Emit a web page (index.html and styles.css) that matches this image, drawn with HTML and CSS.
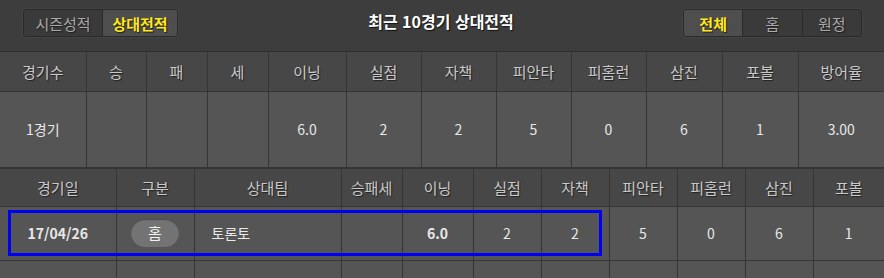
FILE: index.html
```html
<!DOCTYPE html>
<html lang="ko">
<head>
<meta charset="utf-8">
<link rel="stylesheet" href="styles.css">
</head>
<body>
<div class="page">
  <div class="topbar">
    <div class="seg seg-left">
      <span class="seg-btn">시즌성적</span>
      <span class="seg-btn active">상대전적</span>
    </div>
    <div class="title">최근 10경기 상대전적</div>
    <div class="seg seg-right">
      <span class="seg-btn active">전체</span>
      <span class="seg-btn">홈</span>
      <span class="seg-btn">원정</span>
    </div>
  </div>

  <table class="grid summary">
    <colgroup>
      <col style="width:86px"><col style="width:60px"><col style="width:61px"><col style="width:61px">
      <col style="width:78px"><col style="width:75px"><col style="width:75px"><col style="width:75px">
      <col style="width:75px"><col style="width:76px"><col style="width:76px"><col>
    </colgroup>
    <thead>
      <tr><th>경기수</th><th>승</th><th>패</th><th>세</th><th>이닝</th><th>실점</th><th>자책</th><th>피안타</th><th>피홈런</th><th>삼진</th><th>포볼</th><th>방어율</th></tr>
    </thead>
    <tbody>
      <tr><td>1경기</td><td></td><td></td><td></td><td>6.0</td><td>2</td><td>2</td><td>5</td><td>0</td><td>6</td><td>1</td><td>3.00</td></tr>
    </tbody>
  </table>

  <div class="games-wrap">
    <table class="grid games">
      <colgroup>
        <col style="width:116px"><col style="width:78px"><col style="width:147px"><col style="width:61px">
        <col style="width:71px"><col style="width:68px"><col style="width:68px"><col style="width:68px">
        <col style="width:68px"><col style="width:68px"><col>
      </colgroup>
      <thead>
        <tr><th>경기일</th><th>구분</th><th>상대팀</th><th>승패세</th><th>이닝</th><th>실점</th><th>자책</th><th>피안타</th><th>피홈런</th><th>삼진</th><th>포볼</th></tr>
      </thead>
      <tbody>
        <tr class="game-row"><td class="bold">17/04/26</td><td><span class="pill">홈</span></td><td class="team">토론토</td><td></td><td class="bold">6.0</td><td>2</td><td>2</td><td>5</td><td>0</td><td>6</td><td>1</td></tr>
        <tr class="empty-row"><td></td><td></td><td></td><td></td><td></td><td></td><td></td><td></td><td></td><td></td><td></td></tr>
      </tbody>
    </table>
    <div class="highlight"></div>
  </div>
</div>
</body>
</html>
```

FILE: styles.css
```css
* { box-sizing: border-box; }
html, body {
  margin: 0;
  padding: 0;
  background: #3e3e3e;
  font-family: "Noto Sans CJK KR", "Noto Sans", sans-serif;
  color: #dedede;
  overflow: hidden;
}
.page {
  width: 884px;
  height: 278px;
  overflow: hidden;
}
.topbar {
  height: 52px;
  background: #3d3d3d;
  border-bottom: 1px solid #2f2f2f;
  display: flex;
  align-items: flex-start;
  padding-top: 9px;
  position: relative;
}
.seg {
  display: flex;
  height: 28px;
  border: 1px solid #2a2a2a;
  border-radius: 3px;
  background: #3a3a3a;
  overflow: hidden;
  box-shadow: 0 0 0 1px rgba(80,80,80,0.35);
}
.seg-left { margin-left: 23px; width: 155px; }
.seg-right { margin-left: auto; margin-right: 22px; width: 179px; }
.seg-btn {
  flex: 1;
  display: flex;
  align-items: center;
  justify-content: center;
  font-size: 15px;
  color: #a9a9a9;
  text-shadow: 1px 1px 1px #1e1e1e;
  border-left: 1px solid #2a2a2a;
  line-height: 1;
}
.seg-btn:first-child { border-left: 0; }
.seg-left .seg-btn:first-child { flex: 0 0 78px; }
.seg-btn.active {
  background: #4e4e4e;
  color: #ffe81a;
  font-weight: 700;
}
.title {
  position: absolute;
  left: 0;
  right: 0;
  top: 9px;
  text-align: center;
  font-size: 16px;
  font-weight: 700;
  color: #ffffff;
  line-height: 24px;
  text-shadow: 1px 1px 1px #111;
  pointer-events: none;
  padding-right: 2px;
}
.grid {
  width: 884px;
  border-collapse: collapse;
  table-layout: fixed;
}
.grid th, .grid td {
  border: 1px solid #353535;
  text-align: center;
  padding: 0;
  white-space: nowrap;
  overflow: hidden;
}
.grid th {
  background: #474747;
  color: #c9c9c9;
  font-weight: 400;
  font-size: 15px;
  text-shadow: 1px 1px 1px #222;
}
.grid td {
  background: #555555;
  color: #e8e8e8;
  font-size: 14px;
}
.grid tr > :first-child { border-left: 0; }
.grid tr > :last-child { border-right: 0; }
.summary thead tr { height: 39px; }
.summary tbody tr { height: 76px; }
.summary { border-top: 0; }
.summary thead th { border-top: 0; }
.games thead tr { height: 38px; }
.games .game-row { height: 54px; }
.games .empty-row { height: 30px; }
.bold { font-weight: 700; }
.team { text-align: left !important; padding-left: 17px !important; }
.pill {
  display: inline-block;
  width: 48px;
  height: 28px;
  line-height: 28px;
  border-radius: 14px;
  background: #737373;
  color: #f0f0f0;
  font-size: 15px;
  box-shadow: inset 0 1px 1px rgba(0,0,0,0.35);
}
.games-wrap {
  position: relative;
}
.highlight {
  position: absolute;
  left: 8px;
  top: 42px;
  width: 594px;
  height: 46px;
  border: 3px solid #0000f5;
  pointer-events: none;
}
```
